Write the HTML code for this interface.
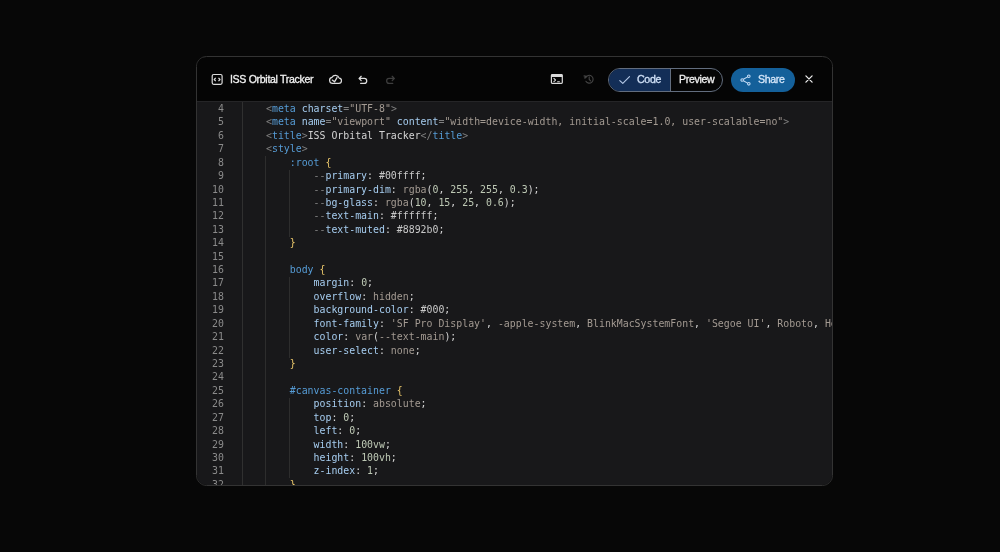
<!DOCTYPE html>
<html lang="en">
<head>
<meta charset="UTF-8">
<title>ISS Orbital Tracker</title>
<style>
*{box-sizing:border-box;margin:0;padding:0}
html,body{width:1000px;height:552px;overflow:hidden;background:#070707}
body{position:relative;font-family:"Liberation Sans",sans-serif;color:#fff}
.modal{position:absolute;left:196px;top:56px;width:637px;height:430px;border:1px solid #333;border-radius:10.5px;background:#050505;overflow:hidden}
.hdr{position:absolute;left:0;top:1px;width:100%;height:43px;background:#050505}
.code{position:absolute;left:0;top:44px;right:0;bottom:-1px;background:#18181a;border-top:1px solid #252527;overflow:hidden}
.gutter{position:absolute;left:0;top:0;width:46px;height:100%;border-right:1px solid #303030}
.title{position:absolute;left:33px;top:15px;font-size:10.6px;font-weight:normal;-webkit-text-stroke:0.3px #f2f2f2;will-change:transform;letter-spacing:-0.33px;line-height:13px;color:#f2f2f2;white-space:nowrap}
.ic{position:absolute;display:block}
.seg{position:absolute;left:410.6px;top:10px;width:115.4px;height:23.6px;border:1px solid #626d7e;border-radius:12px;overflow:hidden;display:flex}
.seg .a{width:62.6px;height:100%;background:#132e57;border-right:1px solid #626d7e;position:relative}
.seg .b{flex:1;position:relative}
.seg span{position:absolute;top:4.3px;font-size:10.6px;line-height:13px;font-weight:normal;-webkit-text-stroke:0.3px currentColor;will-change:transform;letter-spacing:-0.33px;color:#f0f0f0;white-space:nowrap}
.share{position:absolute;left:534px;top:10.4px;width:64px;height:23.2px;border-radius:12px;background:#14609a}
.share span{position:absolute;left:27px;top:4.6px;font-size:10.6px;line-height:13px;font-weight:normal;-webkit-text-stroke:0.3px currentColor;will-change:transform;letter-spacing:-0.33px;color:#d6e7fa}
pre{font-family:"DejaVu Sans Mono","Liberation Mono",monospace;font-size:9.88px;line-height:13.42px;white-space:pre;will-change:transform}
.ln{position:absolute;left:0;top:0.3px;width:27px;text-align:right;color:#8a8a8a}
.src{position:absolute;left:68.5px;top:0;color:#d4d4d4}
.t{color:#569cd6}.g{color:#808080}.a{color:#a6cdf0}.s{color:#a39a92}.y{color:#d7ba7d}.n{color:#bdc8b4}.w{color:#d4d4d4}.p{color:#c8c8c8}.br{color:#e8c56a}
.guide{position:absolute;width:1px;background:#2d2d2d}
</style>
</head>
<body>
<div class="modal">
 <div class="hdr">
  <svg class="ic" style="left:14px;top:15px" width="12" height="12" viewBox="0 0 12 12" fill="none" stroke="#dcdcdc" stroke-width="1.2" stroke-linejoin="round"><rect x="1.2" y="1.5" width="9.9" height="9.8" rx="1.5"/><path d="M4.7 4.8 3.2 6.5 4.7 8.2M7.5 4.8 9 6.5 7.5 8.2" stroke-width="1.2"/></svg>
  <div class="title">ISS Orbital Tracker</div>
  <svg class="ic" style="left:131px;top:15px" width="16" height="12" viewBox="0 0 16 12" fill="none" stroke="#dcdcdc" stroke-width="1.2" stroke-linecap="round" stroke-linejoin="round"><path d="M4.6 10.35A3 3 0 0 1 3.9 4.43 4 4 0 0 1 11.2 5.17 2.6 2.6 0 0 1 10.9 10.35Z"/><path d="M4.3 7.1 6.5 8.8 9 4.6" stroke-width="1.3"/></svg>
  <svg class="ic" style="left:160px;top:16px" width="12" height="12" viewBox="0 0 12 12" fill="none" stroke="#dcdcdc" stroke-width="1.25" stroke-linecap="round" stroke-linejoin="round"><path d="M4.2 2.3 2.2 4.45 4.2 6.6"/><path d="M2.4 4.45H7.3A2.45 2.45 0 0 1 7.3 9.35H3.6"/></svg>
  <svg class="ic" style="left:187px;top:16px" width="12" height="12" viewBox="0 0 12 12" fill="none" stroke="#3e3e3e" stroke-width="1.25" stroke-linecap="round" stroke-linejoin="round"><path d="M8.2 2.3 10.2 4.45 8.2 6.6"/><path d="M10 4.45H5.1A2.45 2.45 0 0 0 5.1 9.35H8.8"/></svg>
  <svg class="ic" style="left:353px;top:15px" width="14" height="12" viewBox="0 0 14 12" fill="none" stroke="#dcdcdc" stroke-width="1.2" stroke-linejoin="round"><rect x="1.4" y="1.6" width="10.9" height="8.75" rx="0.8"/><path d="M1.4 2.9H12.3" stroke-width="2"/><path d="M3.6 5.2 5.5 7 3.6 8.8M7.2 8.7H9.8" stroke-width="1.1"/></svg>
  <svg class="ic" style="left:386px;top:15px" width="13" height="12" viewBox="0 0 13 12" fill="none" stroke="#454545" stroke-width="1.1" stroke-linecap="round" stroke-linejoin="round"><path d="M2.7 4.5A3.9 3.9 0 1 1 2.9 8.3"/><path d="M1.2 2.6 4 3.3 2.1 5.5Z" fill="#454545" stroke-width="0.6"/><path d="M6.2 3.8V6.4L7.5 7.9"/></svg>
  <div class="seg"><div class="a"><svg class="ic" style="left:9px;top:6px" width="13" height="10" viewBox="0 0 13 10" fill="none" stroke="#b4c8e6" stroke-width="1.15" stroke-linecap="round" stroke-linejoin="round"><path d="M1.8 5.6 4.8 8.4 11.5 1.7"/></svg><span style="left:28.3px;color:#cfe0f7">Code</span></div><div class="b"><span style="left:8px">Preview</span></div></div>
  <div class="share"><svg class="ic" style="left:9px;top:5.6px" width="12" height="12" viewBox="0 0 12 12" fill="none" stroke="#c4dcf6" stroke-width="1.05"><circle cx="8.8" cy="2.2" r="1.3"/><circle cx="2.2" cy="6" r="1.3"/><circle cx="8.8" cy="9.8" r="1.3"/><path d="M3.4 5.3 7.6 2.9M3.4 6.7 7.6 9.1"/></svg><span>Share</span></div>
  <svg class="ic" style="left:607.3px;top:16.2px" width="10" height="10" viewBox="0 0 10 10" fill="none" stroke="#e8e8e8" stroke-width="1.3" stroke-linecap="round"><path d="M1.9 1.9 8.1 8.1M8.1 1.9 1.9 8.1"/></svg>
 </div>
 <div class="code">
  <div class="gutter"></div>
  <div class="guide" style="left:68px;top:54.2px;height:340px"></div>
  <div class="guide" style="left:92px;top:67.6px;height:67.1px"></div>
  <div class="guide" style="left:92px;top:175.0px;height:80.5px"></div>
  <div class="guide" style="left:92px;top:295.7px;height:80.5px"></div>
<pre class="ln">4
5
6
7
8
9
10
11
12
13
14
15
16
17
18
19
20
21
22
23
24
25
26
27
28
29
30
31
32</pre>
<pre class="src"><span class="g">&lt;</span><span class="t">meta</span> <span class="a">charset</span><span class="g">=</span><span class="s">"UTF-8"</span><span class="g">&gt;</span>
<span class="g">&lt;</span><span class="t">meta</span> <span class="a">name</span><span class="g">=</span><span class="s">"viewport"</span> <span class="a">content</span><span class="g">=</span><span class="s">"width=device-width, initial-scale=1.0, user-scalable=no"</span><span class="g">&gt;</span>
<span class="g">&lt;</span><span class="t">title</span><span class="g">&gt;</span>ISS Orbital Tracker<span class="g">&lt;/</span><span class="t">title</span><span class="g">&gt;</span>
<span class="g">&lt;</span><span class="t">style</span><span class="g">&gt;</span>
    <span class="t">:root</span> <span class="br">{</span>
        <span class="g">--</span><span class="a">primary</span>: <span class="p">#00ffff</span>;
        <span class="g">--</span><span class="a">primary-dim</span>: <span class="s">rgba</span>(<span class="n">0</span>, <span class="n">255</span>, <span class="n">255</span>, <span class="n">0.3</span>);
        <span class="g">--</span><span class="a">bg-glass</span>: <span class="s">rgba</span>(<span class="n">10</span>, <span class="n">15</span>, <span class="n">25</span>, <span class="n">0.6</span>);
        <span class="g">--</span><span class="a">text-main</span>: <span class="p">#ffffff</span>;
        <span class="g">--</span><span class="a">text-muted</span>: <span class="p">#8892b0</span>;
    <span class="br">}</span>

    <span class="t">body</span> <span class="br">{</span>
        <span class="a">margin</span>: <span class="n">0</span>;
        <span class="a">overflow</span>: <span class="s">hidden</span>;
        <span class="a">background-color</span>: <span class="p">#000</span>;
        <span class="a">font-family</span>: <span class="s">'SF Pro Display'</span>, <span class="s">-apple-system</span>, <span class="s">BlinkMacSystemFont</span>, <span class="s">'Segoe UI'</span>, <span class="s">Roboto</span>, <span class="s">Helvetica</span>
        <span class="a">color</span>: <span class="s">var</span>(<span class="s">--text-main</span>);
        <span class="a">user-select</span>: <span class="s">none</span>;
    <span class="br">}</span>

    <span class="t">#canvas-container</span> <span class="br">{</span>
        <span class="a">position</span>: <span class="s">absolute</span>;
        <span class="a">top</span>: <span class="n">0</span>;
        <span class="a">left</span>: <span class="n">0</span>;
        <span class="a">width</span>: <span class="n">100vw</span>;
        <span class="a">height</span>: <span class="n">100vh</span>;
        <span class="a">z-index</span>: <span class="n">1</span>;
    <span class="br">}</span></pre>
 </div>
</div>
</body>
</html>
